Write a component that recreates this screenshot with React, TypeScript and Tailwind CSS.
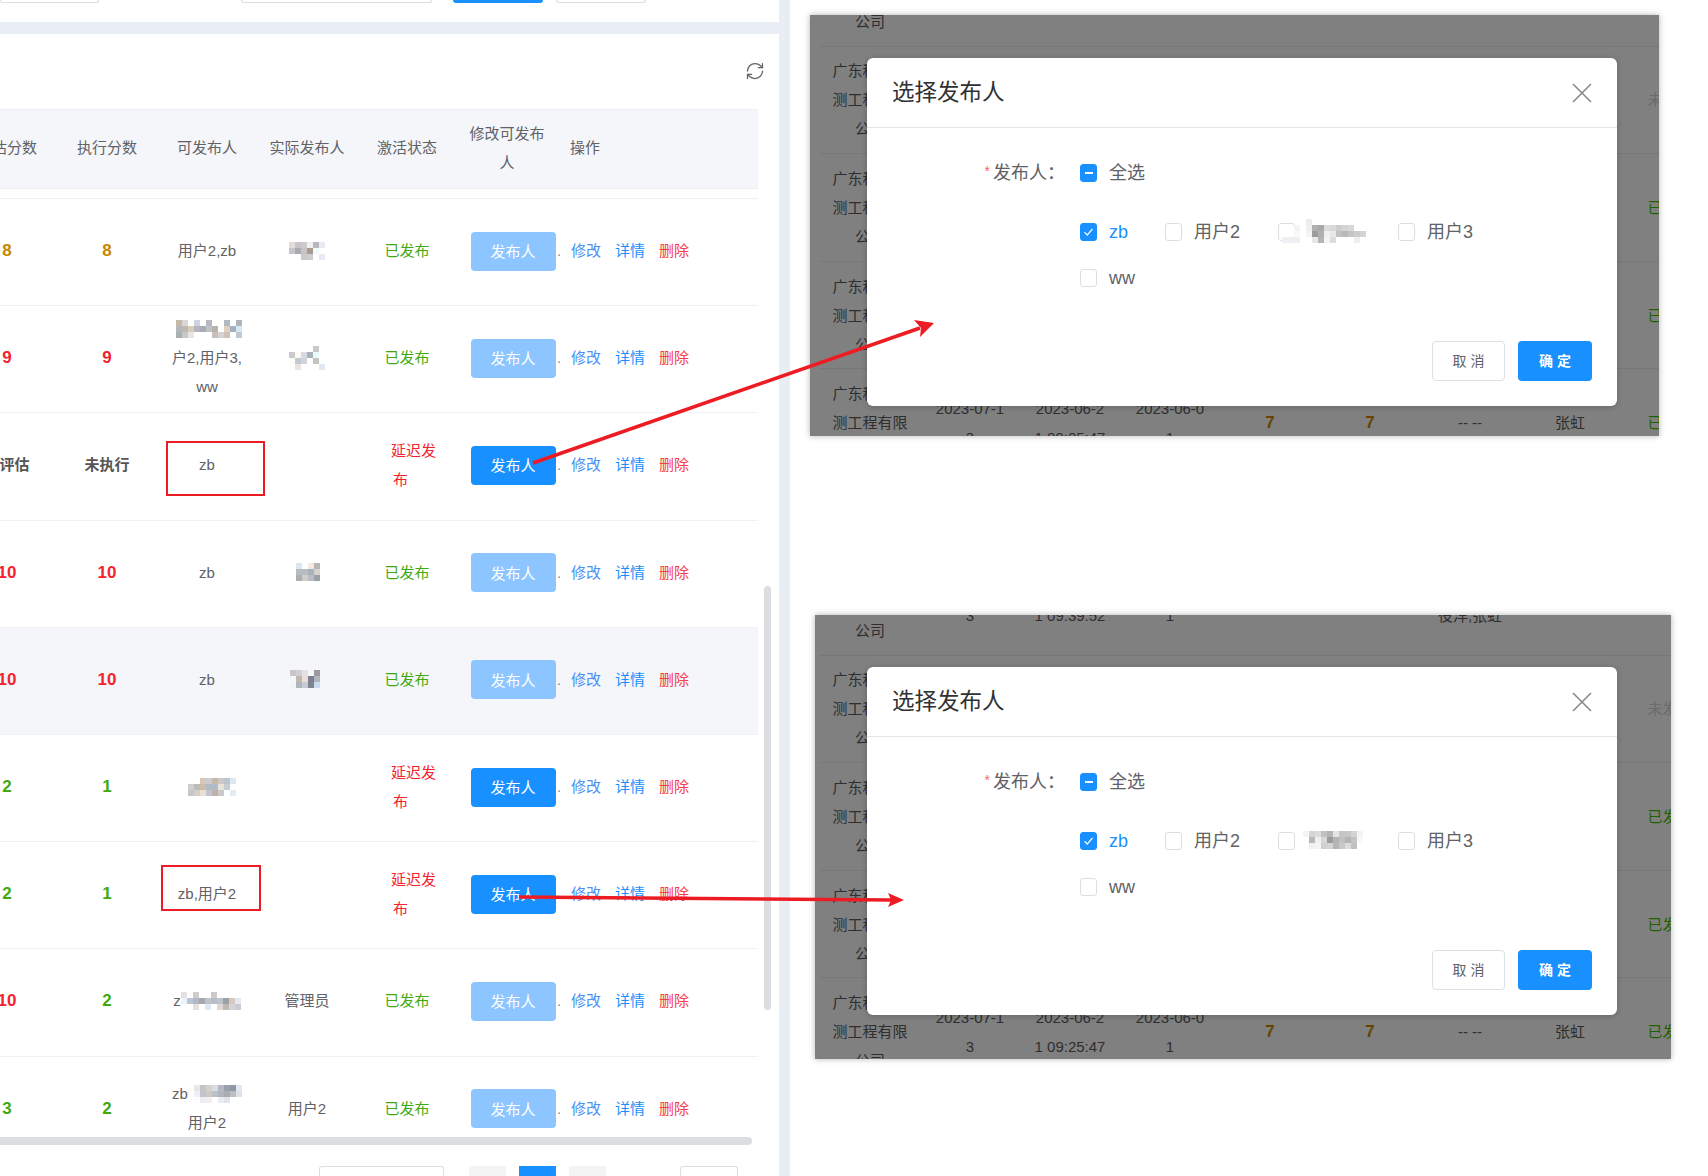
import React from "react";
import { RefreshCw } from "lucide-react";

type Cell = string;

// pixelated (redacted) names from the original capture
const Mosaic = ({ rows, size = 6 }: { rows: Cell[][]; size?: number }) => {
  const cols = rows[0].length;
  return (
    <svg
      width={cols * size}
      height={rows.length * size}
      className="mx-auto block"
      shapeRendering="crispEdges"
    >
      {rows.map((row, y) =>
        row.map((c, x) =>
          c ? <rect key={`${x}-${y}`} x={x * size} y={y * size} width={size} height={size} fill={c} /> : null
        )
      )}
    </svg>
  );
};

const m1 = [
  ["#e0dcd8", "#c6c6ca", "#cfcac8", "#eef0f6", "#b8b8bc", "#e8ecf2"],
  ["#c6c6c8", "#aaadb0", "#c6c4c4", "#a89a90", "#f0fbfb", ""],
  ["", "", "#cbc8c8", "#ccccd2", "", "#e6eaf2"],
];
const m2 = [
  ["#c4baaa", "#d8d6d6", "", "#ccd3dc", "", "#b8b8c0", "", "", "#afb9c4", "", "#aeb4ba"],
  ["#b4b8b8", "#bebab2", "#d8ccb8", "#b2b6c0", "#a8aab4", "#bcc4c8", "#b9b2aa", "", "#e0d0c0", "#a4b0be", "#d4e8f8"],
  ["#a8b0b0", "#c8c8cc", "#e8e6e0", "", "", "", "#c8c0b8", "#d4d2d2", "#ccc0b8", "", "#c4c8cc"],
];
const m3 = [
  ["", "", "", "", "#cbc8c8", ""],
  ["#ccc8cc", "#fdfbf4", "#d8dae2", "#a8b0b8", "#eafcfc", ""],
  ["#fffef4", "#c4c8d0", "#d0d4dc", "", "#c4c4c4", ""],
  ["", "#ece4dc", "", "", "", "#e2e8f2"],
];
const m4 = [
  ["#dce6f2", "#ffffff", "#f4e8e0", "#b4b6b8"],
  ["#b4bec0", "#b8bcc0", "#a8b0b8", "#d4d4cc"],
  ["#aeaeac", "#d0ccc8", "#b8bcc4", "#9ca0a4"],
];
const m5 = [
  ["#c8c6ca", "#d0ced0", "#e6e2e2", "", "#9a9aa0"],
  ["", "#c0b8ae", "#e8e0d8", "#7e8092", "#b0b4bc"],
  ["#f2f4f4", "#b0b6c0", "#c8ccd0", "#808490", "#c8dcf0"],
];
const m6 = [
  ["", "", "#d8c8bc", "#ccccd2", "#c8baa8", "#ccc8c8", "#bcc4cc", "#dce8f4"],
  ["#ccd0cc", "#bcbcb8", "#ccbca8", "#b0bcc4", "#b0bcc8", "#e8e4dc", "#c4ccd4", ""],
  ["#c4c8cc", "#d4d0c4", "#e8e0d4", "#c0c4cc", "#bcb4ac", "#ccc8c8", "", "#e4ecf4"],
];
const m8 = [
  ["#e2e0e2", "", "#cfcccc", "", "", "#ccc8cc", "", "", "", ""],
  ["#eaf4f8", "#bcc4d8", "#b4b8c4", "#a8a8ac", "#c0c4c8", "#b8bec8", "#bcc4cc", "#9ca0a8", "#d8c8c0", "#e4e8f0"],
  ["", "", "#e8e0dc", "", "#dce8f8", "", "#e0d8d4", "#c0b8b4", "#d4d4d4", "#c8ccd4"],
];
const m9 = [
  ["#e8e8ec", "#c8c4c4", "#d4d0cc", "#d8dce4", "#b4b8c0", "#98a0ac", "#8c98a4", "#e4e8ee"],
  ["#f0f0f4", "#c0c4cc", "#d0c8c4", "#b8c0c8", "#b0b4c0", "#a8acb4", "#bcc0c4", "#dde2ea"],
  ["", "#eeeef2", "#f0eeee", "", "#e8ecf2", "#e0e4e8", "", ""],
];
const d1 = [
  ["", "", "", "", "#ececec", "", "", "", "", "", "", "", "", "", ""],
  ["", "", "#f4f4f6", "", "#f0f0f0", "#b0b0b2", "#a8a8aa", "#dcdcdc", "#d8d8d8", "#cccccc", "#d4d4d4", "#d8d8d8", "", "", ""],
  ["", "", "#f8f8fa", "", "#f4f4f4", "#9c9c9e", "#b0b0b2", "#f0f0f0", "#e8e8e8", "#c0c0c0", "#b8b8b8", "#c4c4c4", "#cccccc", "#d4d4d4", ""],
  ["#f0f0f4", "#f0f0f4", "#f0f0f4", "", "", "#e8e8e8", "#b4b4b4", "#f4f4f4", "#dcdcdc", "", "", "", "#eeeeee", "", ""],
];
const d2 = [
  ["#f4f4f4", "#d4d4d4", "#dcdcdc", "#c0c0c0", "#b4b4b4", "#e4e4e4", "#c4c4c4", "#c8c8c8", "#d4d4d4", "#f4f4f4"],
  ["", "#b8b8b8", "#f0f0f0", "#d8d8d8", "#9c9c9c", "#b4b4b4", "#c0c0c0", "#b4b4b4", "#c4c4c4", "#f8f8f8"],
  ["", "#f0f0f0", "#f4f4f4", "#d0d0d0", "#d4d4d4", "#b4b4b4", "#c8c8c8", "#dcdcdc", "#c0c0c0", ""],
];

type Row = {
  est: string;
  run: string;
  tone: string;
  pub: React.ReactNode;
  real?: React.ReactNode;
  late?: boolean;
  hover?: boolean;
};

const orange = "text-[#c98500] text-[17px]";
const red = "text-[#f5222d] text-[17px]";
const green = "text-[#3fa90f] text-[17px]";
const plain = "text-[#555555]";

const rows: Row[] = [
  { est: "8", run: "8", tone: orange, pub: "用户2,zb", real: <Mosaic rows={m1} /> },
  {
    est: "9",
    run: "9",
    tone: red,
    pub: (
      <>
        <div className="flex h-[29px] items-center justify-center pl-1"><Mosaic rows={m2} /></div>
        <div>户2,用户3,</div>
        <div>ww</div>
      </>
    ),
    real: <Mosaic rows={m3} />,
  },
  { est: "未评估", run: "未执行", tone: plain, pub: "zb", late: true },
  { est: "10", run: "10", tone: red, pub: "zb", real: <div className="pl-[2px]"><Mosaic rows={m4} /></div> },
  { est: "10", run: "10", tone: red, pub: "zb", real: <div className="pr-[4px]"><Mosaic rows={m5} /></div>, hover: true },
  { est: "2", run: "1", tone: green, pub: <div className="pl-[10px]"><Mosaic rows={m6} /></div>, late: true },
  { est: "2", run: "1", tone: green, pub: "zb,用户2", late: true },
  {
    est: "10",
    run: "2",
    tone: green,
    pub: (
      <span className="inline-flex items-center">
        z<Mosaic rows={m8} />
      </span>
    ),
    real: "管理员",
  },
  {
    est: "3",
    run: "2",
    tone: green,
    pub: (
      <>
        <div className="flex h-[29px] items-center justify-center">
          zb <span className="ml-[6px] inline-flex"><Mosaic rows={m9} /></span>
        </div>
        <div>用户2</div>
      </>
    ),
    real: "用户2",
  },
];

const TableRow = ({ row }: { row: Row }) => {
  const estTone = row.est === "10" ? red : row.tone;
  return (
    <div
      className={`-ml-[43px] grid h-[107.2px] shrink-0 grid-cols-[100px_100px_100px_100px_100px_100px_201px] items-center border-b border-[#f0f1f6] pb-[2px] text-center leading-[29px] text-[#606266] ${
        row.hover ? "bg-[#f5f6fa]" : "bg-white"
      }`}
    >
      <div className={`pb-px font-bold ${estTone}`}>{row.est}</div>
      <div className={`pb-px font-bold ${row.tone}`}>{row.run}</div>
      <div className="pb-px">{row.pub}</div>
      <div className="pb-px">{row.real}</div>
      {row.late ? (
        <div className="ml-[34px] w-[46px] pb-px text-left text-[#f5222d]">
          <div>延迟发</div>
          <div className="pl-[2px]">布</div>
        </div>
      ) : (
        <div className="pb-px text-[#3fa90f]">已发布</div>
      )}
      <div className="pl-[12px]">
        <button
          className={`h-[39px] w-[85px] rounded-[4px] pt-px text-white ${row.late ? "bg-[#1890ff]" : "bg-[#8cc5ff]"}`}
        >
          发布人
        </button>
      </div>
      <div className="flex items-center gap-[14px] pb-px text-left">
        <span className="-mr-[14px] w-[14px] text-[#8a8a8a]">.</span>
        <span className="text-[#4a90f5]">修改</span>
        <span className="text-[#1890ff]">详情</span>
        <span className="text-[#f5404a]">删除</span>
      </div>
    </div>
  );
};

const Check = ({ state }: { state?: "on" | "half" }) => (
  <span
    className={`flex h-[18px] w-[17px] shrink-0 items-center justify-center rounded-[3px] border ${
      state ? "border-[#1890ff] bg-[#1890ff]" : "border-[#dcdee2] bg-white"
    }`}
  >
    {state === "half" && <span className="h-[2px] w-[8px] bg-white" />}
    {state === "on" && (
      <svg width="11" height="10" viewBox="0 0 11 10" fill="none">
        <path d="M1.5 5.2 4.3 8 9.5 1.8" stroke="#fff" strokeWidth="1.2" />
      </svg>
    )}
  </span>
);

const Option = ({ label, on, className }: { label: React.ReactNode; on?: boolean; className: string }) => (
  <div className={`flex items-center gap-[12px] ${className}`}>
    <Check state={on ? "on" : undefined} />
    <span className={on ? "text-[#1890ff]" : ""}>{label}</span>
  </div>
);

const Dialog = ({ name, className }: { name: React.ReactNode; className: string }) => (
  <div className={`absolute flex h-[348px] w-[750px] flex-col rounded-[6px] bg-white text-[#606266] shadow-[0_1px_6px_rgba(0,0,0,0.2)] ${className}`}>
    <div className="flex h-[70px] shrink-0 items-center justify-between border-b border-[#e4e5ea] px-[25px]">
      <span className="text-[22.5px] text-[#303133]">选择发布人</span>
      <svg width="20" height="20" viewBox="0 0 20 20" fill="none">
        <path d="M1 1 19 19M19 1 1 19" stroke="#85888f" strokeWidth="1.6" />
      </svg>
    </div>
    <div className="mt-[36px] flex h-[18px] items-center text-[18px] leading-none">
      <div className="flex w-[213px] justify-end pr-[15px]">
        <span className="mr-[3px] text-[14px] text-[#f56c6c]">*</span>发布人：
      </div>
      <Check state="half" />
      <span className="ml-[12px]">全选</span>
    </div>
    <div className="ml-[213px] mt-[41px] flex h-[18px] items-center text-[18px] leading-none">
      <Option label="zb" on className="w-[85px]" />
      <Option label="用户2" className="w-[113px]" />
      <Option label={name} className="w-[120px]" />
      <Option label="用户3" className="w-auto" />
    </div>
    <div className="ml-[213px] mt-[28px] flex h-[18px] items-center text-[18px] leading-none">
      <Option label="ww" className="w-auto" />
    </div>
    <div className="mt-auto flex justify-end gap-[13px] pb-[25px] pr-[25px] text-[14px]">
      <button className="h-[40px] w-[73px] rounded-[4px] border border-[#dcdfe6] bg-white">取 消</button>
      <button className="h-[40px] w-[74px] rounded-[4px] bg-[#1890ff] font-bold text-white">确 定</button>
    </div>
  </div>
);

type BgRow = { d: string[]; d2: string[]; d3: string[]; score?: string; dash?: string; note?: string; name?: string; status?: string };

const BgTableRow = ({ r }: { r: BgRow }) => (
  <div className="grid h-[107.6px] shrink-0 grid-cols-[100px_100px_100px_100px_100px_100px_100px_100px_100px] items-center border-b border-[#777777] text-center leading-[29px] text-[#2e2e2e]">
    <div className="px-[12px]">广东科技检测工程有限公司</div>
    <div>{r.d.map((t) => <div key={t}>{t}</div>)}</div>
    <div>{r.d2.map((t) => <div key={t}>{t}</div>)}</div>
    <div>{r.d3.map((t) => <div key={t}>{t}</div>)}</div>
    <div className="text-[17px] font-bold text-[#664400]">{r.score}</div>
    <div className="text-[17px] font-bold text-[#664400]">{r.score}</div>
    <div>
      {r.dash}
      {r.note && (
        <>
          <div>&nbsp;</div>
          <div>{r.note}</div>
        </>
      )}
    </div>
    <div>{r.name}</div>
    <div className={r.status === "未发布" ? "text-[#6b6b6b]" : "text-[#1f6000]"}>{r.status}</div>
  </div>
);

const bgBase = { d: ["2023-07-1", "3"], d2: ["2023-06-2", "1 09:25:47"], d3: ["2023-06-0", "1"] };

const Shot = ({ className, inner, top, name, dialog }: { className: string; inner: string; top: BgRow; name: React.ReactNode; dialog: string }) => (
  <div className={`relative overflow-hidden bg-[#808080] shadow-[0_0_6px_rgba(0,0,0,0.3)] ${className}`}>
    <div className={`flex flex-col ${inner}`}>
      <BgTableRow r={top} />
      <BgTableRow r={{ ...bgBase, score: "8", dash: "-- --", status: "未发布" }} />
      <BgTableRow r={{ ...bgBase, score: "9", dash: "-- --", status: "已发布" }} />
      <BgTableRow r={{ ...bgBase, score: "8", dash: "-- --", status: "已发布" }} />
      <BgTableRow r={{ ...bgBase, score: "7", dash: "-- --", name: "张虹", status: "已发布" }} />
    </div>
    <Dialog name={name} className={dialog} />
  </div>
);

export default function App() {
  return (
    <div className="relative flex h-[1176px] w-[1708px] overflow-hidden bg-white font-['Liberation_Sans','Noto_Sans_CJK_SC',sans-serif] text-[15px]">
      <div className="flex h-full w-[790px] shrink-0 flex-col bg-[#e9edf4]">
        <div className="flex h-[22px] w-[779px] shrink-0 items-start bg-white">
          <div className="h-[3px] w-[99px] rounded-b-[3px] border-x border-b border-[#dcdee2]" />
          <div className="ml-[142px] h-[3px] w-[191px] rounded-b-[3px] border-x border-b border-[#dcdee2]" />
          <div className="ml-[21px] h-[3px] w-[90px] rounded-b-[3px] bg-[#1890ff]" />
          <div className="ml-[13px] h-[3px] w-[90px] rounded-b-[3px] border-x border-b border-[#dcdee2]" />
        </div>
        <div className="relative mt-[12px] flex w-[779px] flex-1 flex-col bg-white">
          <div className="flex h-[75px] shrink-0 items-center justify-end pb-[1px] pr-[14px]">
            <RefreshCw size={20} strokeWidth={1.5} className="text-[#606266]" />
          </div>
          <div className="flex h-[1028px] w-[758px] shrink-0 flex-col overflow-hidden">
            <div className="-ml-[43px] grid h-[80px] shrink-0 grid-cols-[100px_100px_100px_100px_100px_100px_201px] items-center border-y border-[#eceef3] bg-[#f5f6fa] pb-[3px] text-center leading-[29px] text-[#606266]">
              <div>预估分数</div>
              <div>执行分数</div>
              <div>可发布人</div>
              <div>实际发布人</div>
              <div>激活状态</div>
              <div className="px-[12px]">修改可发布人</div>
              <div className="pl-[13px] text-left">操作</div>
            </div>
            <div className="h-[10px] shrink-0 border-b border-[#eff0f5]" />
            {rows.map((row, i) => (
              <TableRow key={i} row={row} />
            ))}
          </div>
          <div className="absolute left-0 top-[1103px] h-[8px] w-[752px] rounded-r-[4px] bg-[#dcdde0]" />
          <div className="absolute left-[764px] top-[552px] h-[424px] w-[7px] rounded-[4px] bg-[#dcdde0]" />
          <div className="absolute left-[319px] top-[1132px] h-[12px] w-[125px] rounded-t-[3px] border-x border-t border-[#dcdee2] bg-white" />
          <div className="absolute left-[469px] top-[1132px] h-[12px] w-[37px] bg-[#f4f4f5]" />
          <div className="absolute left-[519px] top-[1132px] h-[12px] w-[37px] bg-[#1890ff]" />
          <div className="absolute left-[569px] top-[1132px] h-[12px] w-[37px] bg-[#f4f4f5]" />
          <div className="absolute left-[680px] top-[1132px] h-[12px] w-[58px] rounded-t-[3px] border-x border-t border-[#dcdee2] bg-white" />
        </div>
      </div>

      <div className="flex flex-col">
        <Shot
          className="ml-[20px] mt-[15px] h-[421px] w-[849px]"
          inner="-mt-[76px] pl-[10px]"
          top={bgBase}
          name={<span className="-ml-[25px] inline-flex"><Mosaic rows={d1} /></span>}
          dialog="left-[57px] top-[43px]"
        />
        <Shot
          className="ml-[25px] mt-[179px] h-[444px] w-[856px]"
          inner="-mt-[67px] pl-[5px]"
          top={{ d: ["2023-07-1", "3"], d2: ["2023-07-2", "1 09:39:52"], d3: ["2023-07-0", "1"], note: "役洋,张虹" }}
          name={<span className="-ml-[4px] inline-flex"><Mosaic rows={d2} /></span>}
          dialog="left-[52px] top-[52px]"
        />
      </div>

      {/* annotations drawn over the capture */}
      <div className="absolute left-[166px] top-[441px] h-[55px] w-[99px] border-2 border-[#ed1c24]" />
      <div className="absolute left-[161px] top-[865px] h-[46px] w-[100px] border-2 border-[#ed1c24]" />
      <svg className="pointer-events-none absolute left-0 top-0" width="1708" height="1176">
        <line x1="533" y1="463" x2="920" y2="328" stroke="#ed1c24" strokeWidth="3.5" />
        <polygon points="934,323 920,337 921,328 914,320" fill="#ed1c24" />
        <line x1="519" y1="897" x2="892" y2="900" stroke="#ed1c24" strokeWidth="3.5" />
        <polygon points="904,900 888,907 891,900 888,893" fill="#ed1c24" />
      </svg>
    </div>
  );
}
